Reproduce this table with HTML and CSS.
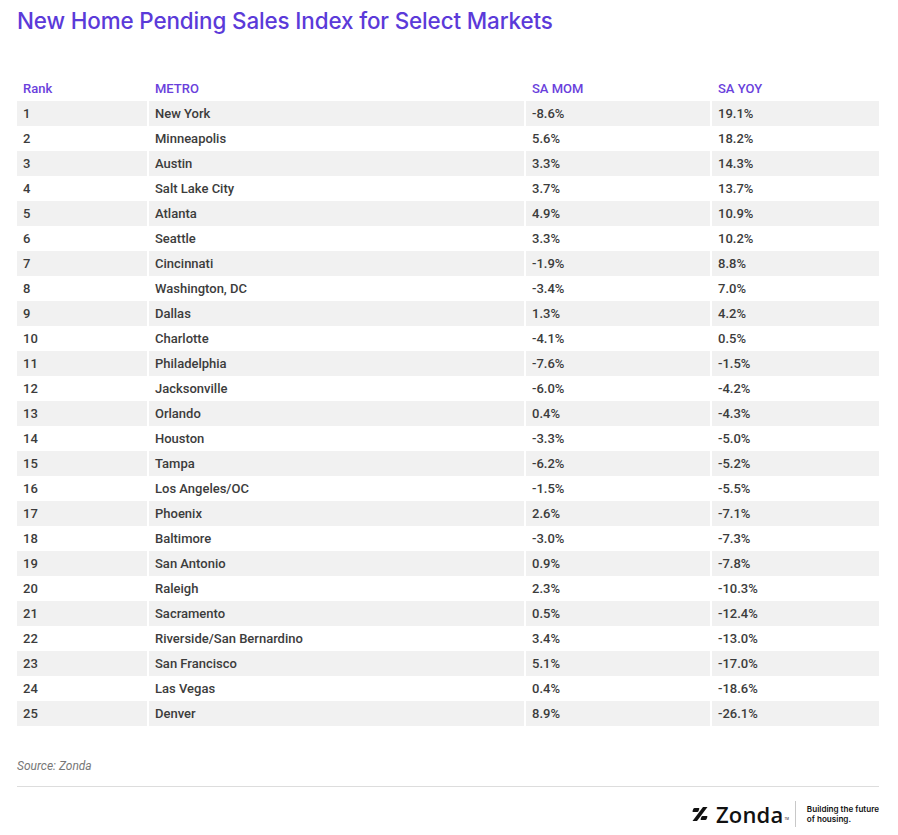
FILE: index.html
```html
<!DOCTYPE html>
<html>
<head>
<meta charset="utf-8">
<link rel="stylesheet" href="styles.css">
</head>
<body>
<div class="page">
  <h1 class="title">New Home Pending Sales Index for Select Markets</h1>
  <table class="data">
    <colgroup>
      <col class="c1"><col class="c2"><col class="c3"><col class="c4">
    </colgroup>
    <thead>
      <tr><th>Rank</th><th>METRO</th><th>SA MOM</th><th>SA YOY</th></tr>
    </thead>
    <tbody>
      <tr><td>1</td><td>New York</td><td>-8.6%</td><td>19.1%</td></tr>
      <tr><td>2</td><td>Minneapolis</td><td>5.6%</td><td>18.2%</td></tr>
      <tr><td>3</td><td>Austin</td><td>3.3%</td><td>14.3%</td></tr>
      <tr><td>4</td><td>Salt Lake City</td><td>3.7%</td><td>13.7%</td></tr>
      <tr><td>5</td><td>Atlanta</td><td>4.9%</td><td>10.9%</td></tr>
      <tr><td>6</td><td>Seattle</td><td>3.3%</td><td>10.2%</td></tr>
      <tr><td>7</td><td>Cincinnati</td><td>-1.9%</td><td>8.8%</td></tr>
      <tr><td>8</td><td>Washington, DC</td><td>-3.4%</td><td>7.0%</td></tr>
      <tr><td>9</td><td>Dallas</td><td>1.3%</td><td>4.2%</td></tr>
      <tr><td>10</td><td>Charlotte</td><td>-4.1%</td><td>0.5%</td></tr>
      <tr><td>11</td><td>Philadelphia</td><td>-7.6%</td><td>-1.5%</td></tr>
      <tr><td>12</td><td>Jacksonville</td><td>-6.0%</td><td>-4.2%</td></tr>
      <tr><td>13</td><td>Orlando</td><td>0.4%</td><td>-4.3%</td></tr>
      <tr><td>14</td><td>Houston</td><td>-3.3%</td><td>-5.0%</td></tr>
      <tr><td>15</td><td>Tampa</td><td>-6.2%</td><td>-5.2%</td></tr>
      <tr><td>16</td><td>Los Angeles/OC</td><td>-1.5%</td><td>-5.5%</td></tr>
      <tr><td>17</td><td>Phoenix</td><td>2.6%</td><td>-7.1%</td></tr>
      <tr><td>18</td><td>Baltimore</td><td>-3.0%</td><td>-7.3%</td></tr>
      <tr><td>19</td><td>San Antonio</td><td>0.9%</td><td>-7.8%</td></tr>
      <tr><td>20</td><td>Raleigh</td><td>2.3%</td><td>-10.3%</td></tr>
      <tr><td>21</td><td>Sacramento</td><td>0.5%</td><td>-12.4%</td></tr>
      <tr><td>22</td><td>Riverside/San Bernardino</td><td>3.4%</td><td>-13.0%</td></tr>
      <tr><td>23</td><td>San Francisco</td><td>5.1%</td><td>-17.0%</td></tr>
      <tr><td>24</td><td>Las Vegas</td><td>0.4%</td><td>-18.6%</td></tr>
      <tr><td>25</td><td>Denver</td><td>8.9%</td><td>-26.1%</td></tr>
    </tbody>
  </table>
  <p class="source">Source: Zonda</p>
  <hr class="rule">
  <div class="footer">
    <div class="brand">
      <svg class="mark" width="16" height="14" viewBox="0 0 16 14">
        <rect x="0" y="1" width="6" height="4" rx="1" fill="#111" transform="skewX(-20) translate(2 0)"/>
        <polygon points="11,0 15.5,0 5,14 0.5,14" fill="#111"/>
        <rect x="10" y="9" width="6" height="4" rx="1" fill="#111" transform="skewX(-20) translate(3 0)"/>
      </svg>
      <span class="word">Zonda</span><span class="tm">TM</span>
    </div>
    <div class="tag">Building the future<br>of housing.</div>
  </div>
</div>
</body>
</html>
```

FILE: styles.css
```css
html, body {
  margin: 0;
  padding: 0;
  background: #ffffff;
}
.page {
  padding: 0 19px 0 17px;
  font-family: Roboto, "Liberation Sans", sans-serif;
  color: #333333;
}
.title {
  margin: 0;
  padding-top: 6px;
  font-family: Inter, "Open Sans", sans-serif;
  font-weight: 500;
  font-size: 22.4px;
  line-height: 30px;
  color: #5b3ad9;
  letter-spacing: -0.12px;
}
.data {
  margin-top: 40px;
  width: 862px;
  border-collapse: collapse;
  font-size: 13px;
}
.c1 { width: 131px; }
.c2 { width: 377px; }
.c3 { width: 186px; }
.c4 { width: 168px; }
.data th {
  text-align: left;
  font-weight: 500;
  color: #6a3fdc;
  height: 25px;
  padding: 0 6px;
  font-size: 13px;
}
.data td {
  height: 25px;
  padding: 0 6px;
  font-weight: 500;
  color: #3c3c3c;
}
.data td + td, .data th + th {
  border-left: 2px solid #ffffff;
}
.data tbody tr:nth-child(odd) td {
  background: #f1f1f1;
}
.source {
  margin: 32px 0 0;
  font-size: 12px;
  font-style: italic;
  color: #777777;
  line-height: 16px;
}
.rule {
  margin: 12px 0 0;
  border: 0;
  border-top: 1px solid #dddddd;
}
.footer {
  display: flex;
  justify-content: flex-end;
  align-items: center;
  margin-top: 14px;
  padding-right: 0;
}
.brand {
  display: flex;
  align-items: center;
  padding-right: 6px;
  border-right: 1px solid #c8c8c8;
  height: 26px;
}
.mark {
  margin-right: 8px;
}
.word {
  font-family: "Open Sans", Inter, sans-serif;
  font-weight: 600;
  font-size: 22px;
  color: #111111;
  letter-spacing: 0.2px;
  line-height: 26px;
}
.tm {
  font-size: 3px;
  align-self: flex-end;
  margin-bottom: 6px;
  margin-left: 1px;
  color: #111;
}
.tag {
  padding-left: 11px;
  font-family: Inter, sans-serif;
  font-size: 8.1px;
  line-height: 10px;
  color: #111111;
  font-weight: 600;
}
```
